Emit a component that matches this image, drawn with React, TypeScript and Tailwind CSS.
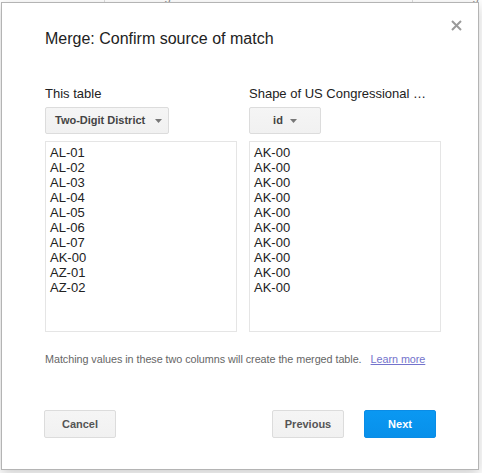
import React from 'react';

const leftValues = ['AL-01', 'AL-02', 'AL-03', 'AL-04', 'AL-05', 'AL-06', 'AL-07', 'AK-00', 'AZ-01', 'AZ-02'];
const rightValues = Array.from({ length: 10 }, () => 'AK-00');

const Caret: React.FC = () => (
  <svg width="7" height="4" viewBox="0 0 7 4" className="shrink-0">
    <path d="M0 0 L7 0 L3.5 4 Z" fill="#777" />
  </svg>
);

const ValueList: React.FC<{ items: string[] }> = ({ items }) => (
  <div className="w-[192px] h-[191px] border border-[#e5e5e5] bg-white pl-[4px] pt-[3px] text-[13px] leading-[15px] text-[#222] overflow-hidden">
    {items.map((v, i) => (
      <div key={i}>{v}</div>
    ))}
  </div>
);

export default function App() {
  return (
    <div
      className="relative w-[482px] h-[473px] bg-white overflow-hidden"
      style={{ fontFamily: '"Liberation Sans", Arial, sans-serif' }}
    >
      {/* spreadsheet header behind the dialog */}
      <div className="flex h-[3px] overflow-hidden text-[12px] leading-[14px] text-[#888]">
        <div className="w-[105px] border-r border-[#ddd] -mt-[11px] pl-[4px] text-right pr-[45px] whitespace-nowrap">ional Size</div>
        <div className="w-[308px] border-r border-[#ddd] -mt-[11px] pl-[8px] whitespace-nowrap">% Housing Units That Are Mobile Homes</div>
        <div className="flex-1 -mt-[11px] pl-[8px] whitespace-nowrap">% Housing</div>
      </div>

      <div className="absolute left-[1px] top-[2px] w-[478px] h-[468px] bg-white border border-[#b4b4b4] shadow-[0_4px_12px_rgba(0,0,0,0.2)] pl-[43px] pt-[26px]">
        <button className="absolute right-[16px] top-[17px] w-[11px] h-[11px] flex items-center justify-center">
          <svg width="11" height="11" viewBox="0 0 11 11">
            <path d="M1 1 L10 10 M10 1 L1 10" stroke="#9a9a9a" strokeWidth="2" />
          </svg>
        </button>

        <h1 className="text-[16px] leading-[20px] text-[#222] font-normal">Merge: Confirm source of match</h1>

        <div className="flex gap-[12px] mt-[37px]">
          <div className="flex flex-col">
            <div className="text-[13px] leading-[16px] text-[#222]">This table</div>
            <button className="mt-[5px] w-[124px] h-[27px] flex items-center gap-[10px] pl-[9px] rounded-[2px] border border-[#dcdcdc] bg-gradient-to-b from-[#f5f5f5] to-[#f1f1f1] text-[11px] font-bold text-[#444]">
              <span>Two-Digit District</span>
              <Caret />
            </button>
            <div className="mt-[7px]">
              <ValueList items={leftValues} />
            </div>
          </div>
          <div className="flex flex-col">
            <div className="text-[13px] leading-[16px] text-[#222] whitespace-nowrap">Shape of US Congressional …</div>
            <button className="mt-[5px] w-[72px] h-[27px] flex items-center justify-center gap-[7px] rounded-[2px] border border-[#dcdcdc] bg-gradient-to-b from-[#f5f5f5] to-[#f1f1f1] text-[11px] font-bold text-[#444]">
              <span>id</span>
              <Caret />
            </button>
            <div className="mt-[7px]">
              <ValueList items={rightValues} />
            </div>
          </div>
        </div>

        <p className="mt-[20px] text-[10.8px] leading-[14px] text-[#666] whitespace-nowrap tracking-[-0.05px]">
          Matching values in these two columns will create the merged table.
          <a className="ml-[9px] text-[#7373cc] underline">Learn more</a>
        </p>

        <div className="mt-[44px] -ml-px w-[392px] flex justify-between">
          <button className="w-[72px] h-[28px] rounded-[2px] border border-[#dcdcdc] bg-gradient-to-b from-[#f5f5f5] to-[#f1f1f1] text-[11px] font-bold text-[#555]">
            Cancel
          </button>
          <div className="flex gap-[20px]">
            <button className="w-[72px] h-[28px] rounded-[2px] border border-[#dcdcdc] bg-gradient-to-b from-[#f5f5f5] to-[#f1f1f1] text-[11px] font-bold text-[#555]">
              Previous
            </button>
            <button className="w-[72px] h-[28px] rounded-[2px] border border-[#0a8ce6] bg-gradient-to-b from-[#0a98f2] to-[#0890ea] text-[11px] font-bold text-white">
              Next
            </button>
          </div>
        </div>
      </div>
    </div>
  );
}
